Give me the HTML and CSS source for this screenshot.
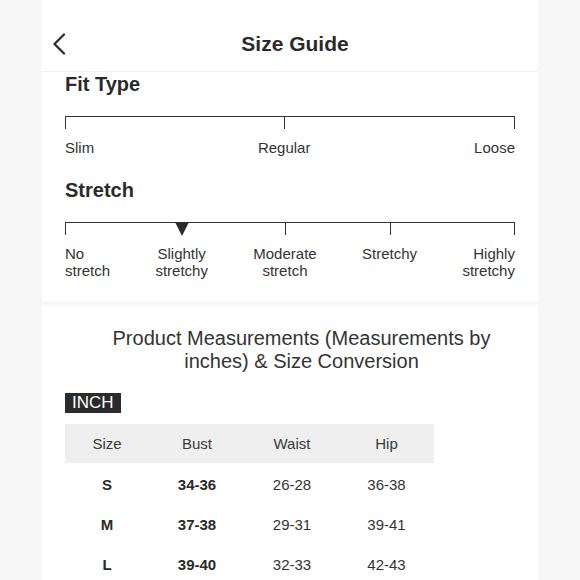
FILE: index.html
```html
<!DOCTYPE html>
<html lang="en">
<head>
<meta charset="utf-8">
<title>Size Guide</title>
<link rel="stylesheet" href="styles.css">
</head>
<body>
<div class="page">
  <header class="topbar">
    <span class="back">
      <svg width="14" height="22" viewBox="0 0 14 22"><polyline points="12,1.5 2.5,11 12,20.5" fill="none" stroke="#2a2a2a" stroke-width="2.2" stroke-linecap="round" stroke-linejoin="round"/></svg>
    </span>
    <h1 class="title">Size Guide</h1>
    <span></span>
  </header>

  <section class="panel fit-panel">
    <h2 class="heading">Fit Type</h2>
    <div class="scale">
      <div class="mark">Slim</div>
      <div class="mark">Regular</div>
      <div class="mark">Loose</div>
    </div>
    <h2 class="heading heading-gap">Stretch</h2>
    <div class="scale">
      <div class="mark">No<br>stretch</div>
      <div class="mark selected">Slightly<br>stretchy</div>
      <div class="mark">Moderate<br>stretch</div>
      <div class="mark">Stretchy</div>
      <div class="mark">Highly<br>stretchy</div>
    </div>
  </section>

  <section class="panel measure-panel">
    <p class="measure-title">Product Measurements (Measurements by inches) &amp; Size Conversion</p>
    <span class="unit">INCH</span>
    <div class="table">
      <div class="cell head">Size</div>
      <div class="cell head">Bust</div>
      <div class="cell head">Waist</div>
      <div class="cell head">Hip</div>

      <div class="cell bold">S</div>
      <div class="cell bold">34-36</div>
      <div class="cell">26-28</div>
      <div class="cell">36-38</div>

      <div class="cell bold">M</div>
      <div class="cell bold">37-38</div>
      <div class="cell">29-31</div>
      <div class="cell">39-41</div>

      <div class="cell bold">L</div>
      <div class="cell bold">39-40</div>
      <div class="cell">32-33</div>
      <div class="cell">42-43</div>
    </div>
  </section>
</div>
</body>
</html>
```

FILE: styles.css
```css
* { box-sizing: border-box; }

html, body {
  margin: 0;
  padding: 0;
}

body {
  background: #f7f7f7;
  font-family: "Liberation Sans", Arial, sans-serif;
  color: #2b2b2b;
  height: 580px;
  overflow: hidden;
}

.page {
  width: 496px;
  margin: 0 auto;
}

.topbar {
  background: #fff;
  height: 72px;
  border-bottom: 1px solid #efefef;
  display: grid;
  grid-template-columns: 1fr auto 1fr;
  align-items: center;
  padding: 16px 0 0 10px;
}

.back {
  display: flex;
  align-items: center;
}

.title {
  margin: 0;
  font-size: 21px;
  font-weight: bold;
  color: #2a2a2a;
}

.panel {
  background: #fff;
}

.fit-panel {
  padding: 1px 23px 20px;
  margin-bottom: 5px;
}

.heading {
  margin: 0;
  font-size: 20px;
  font-weight: bold;
  line-height: 23px;
  color: #2a2a2a;
}

.heading-gap {
  margin-top: 21px;
}

.scale {
  margin-top: 20px;
  border-top: 1px solid #333;
  padding-top: 22px;
  padding-bottom: 2px;
  display: flex;
  justify-content: space-between;
}

.mark {
  position: relative;
  font-size: 15px;
  line-height: 17px;
  color: #333;
  text-align: center;
}

.mark::before {
  content: "";
  position: absolute;
  top: -23px;
  left: 50%;
  width: 1px;
  height: 13px;
  background: #333;
}

.mark:first-child {
  text-align: left;
}

.mark:first-child::before {
  left: 0;
}

.mark:last-child {
  text-align: right;
}

.mark:last-child::before {
  left: auto;
  right: 0;
}

.mark.selected::before {
  width: 0;
  height: 0;
  background: none;
  top: -23px;
  margin-left: -7px;
  border-left: 7px solid transparent;
  border-right: 7px solid transparent;
  border-top: 14px solid #2b2b2b;
}

.measure-panel {
  padding: 21px 23px 0 46px;
  min-height: 300px;
}

.measure-title {
  margin: 0;
  font-size: 20px;
  line-height: 23px;
  text-align: center;
  color: #333;
}

.unit {
  display: inline-block;
  margin-top: 20px;
  margin-left: -23px;
  background: #2b2b2b;
  color: #fff;
  font-size: 17px;
  line-height: 20px;
  padding: 0 7px;
}

.table {
  margin-top: 11px;
  margin-left: -23px;
  display: grid;
  grid-template-columns: 84px 96px 94px 95px;
  grid-auto-rows: 40px;
  width: 369px;
}

.cell {
  display: flex;
  align-items: center;
  justify-content: center;
  font-size: 15px;
  color: #333;
}

.cell.head {
  background: #efefef;
  height: 39px;
  color: #3a3a3a;
}

.cell.bold {
  font-weight: bold;
  color: #2a2a2a;
}
```
